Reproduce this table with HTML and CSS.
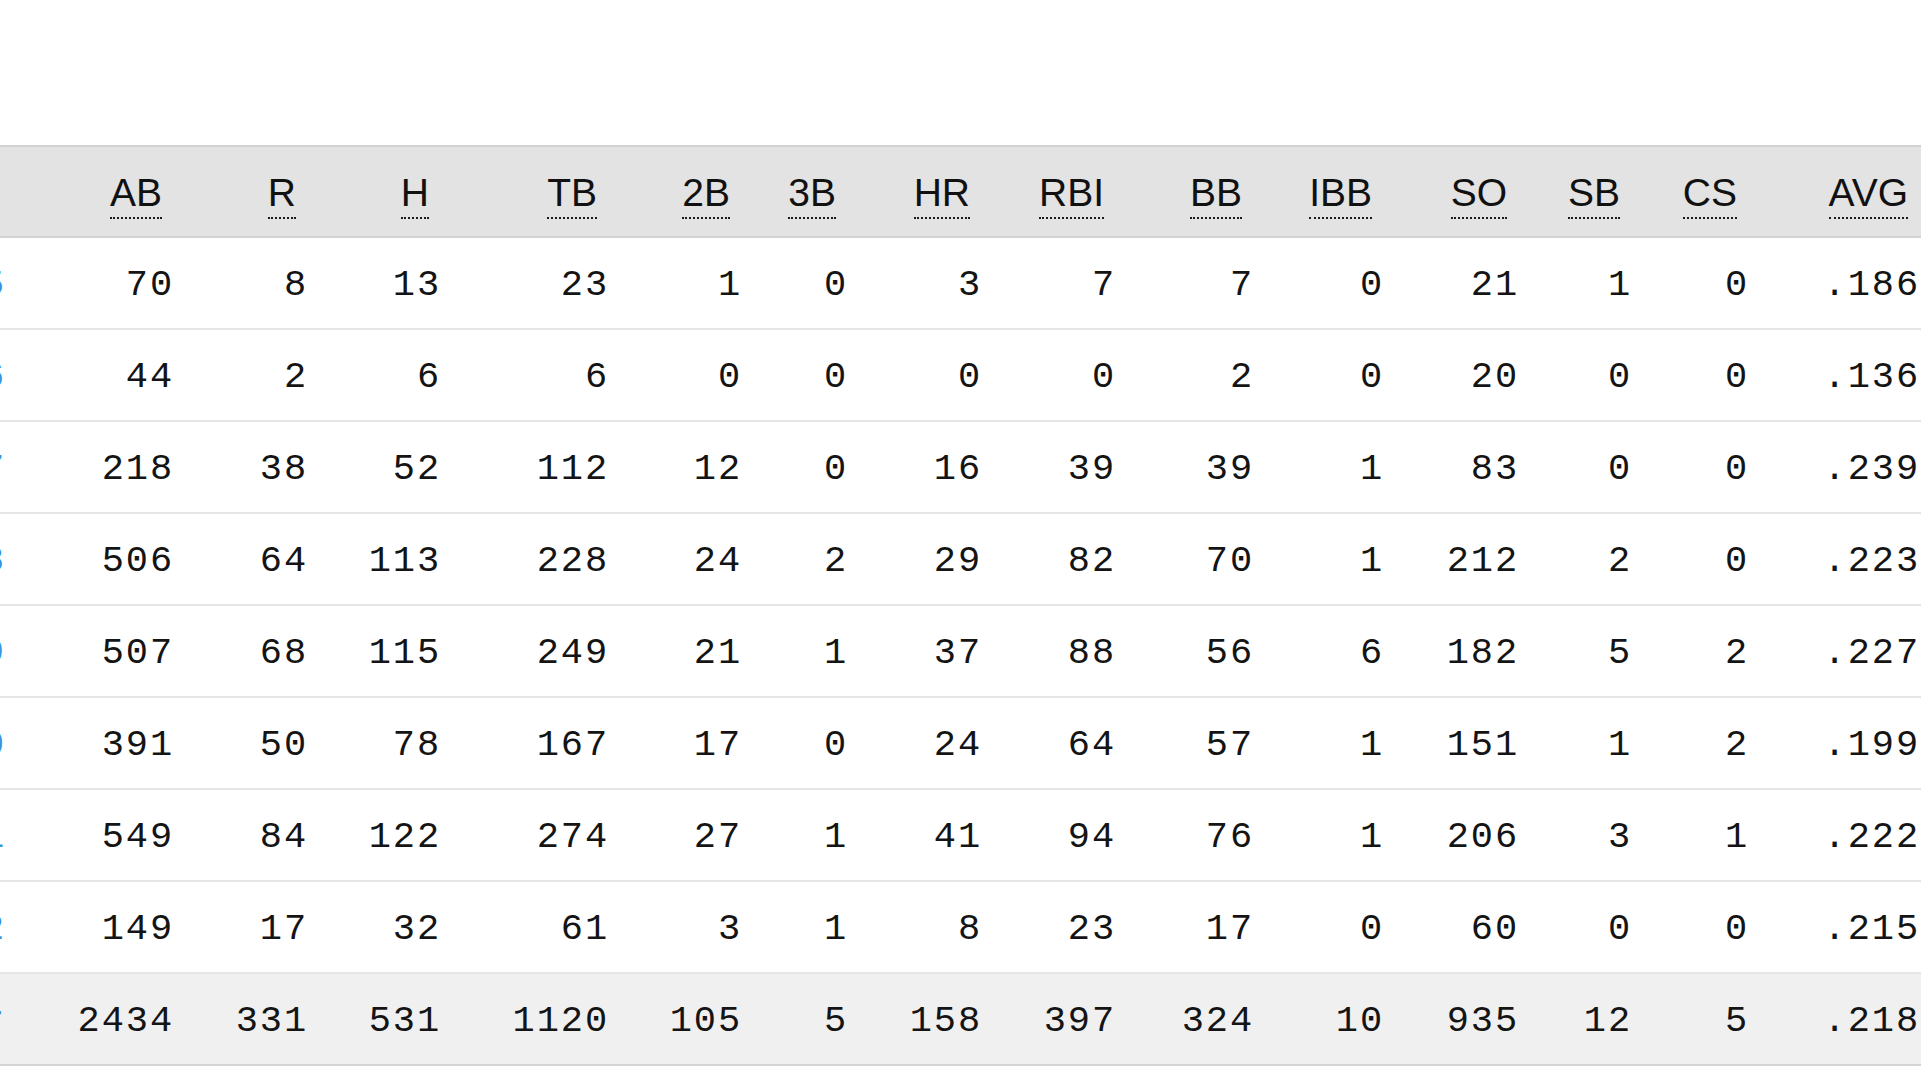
FILE: index.html
```html
<!DOCTYPE html>
<html lang="en">
<head>
<meta charset="utf-8">
<title>Batting Stats</title>
<link rel="stylesheet" href="styles.css">
</head>
<body>
<div class="scroller">
  <table class="stats">
    <colgroup>
      <col class="c-year">
      <col class="c-ab"><col class="c-r"><col class="c-h"><col class="c-tb">
      <col class="c-2b"><col class="c-3b"><col class="c-hr"><col class="c-rbi">
      <col class="c-bb"><col class="c-ibb"><col class="c-so"><col class="c-sb">
      <col class="c-cs"><col class="c-avg">
    </colgroup>
    <thead>
      <tr>
        <th class="year"><abbr title="Year">Year</abbr></th>
        <th><abbr title="At Bats">AB</abbr></th>
        <th><abbr title="Runs">R</abbr></th>
        <th><abbr title="Hits">H</abbr></th>
        <th><abbr title="Total Bases">TB</abbr></th>
        <th><abbr title="Doubles">2B</abbr></th>
        <th><abbr title="Triples">3B</abbr></th>
        <th><abbr title="Home Runs">HR</abbr></th>
        <th><abbr title="Runs Batted In">RBI</abbr></th>
        <th><abbr title="Walks">BB</abbr></th>
        <th><abbr title="Intentional Walks">IBB</abbr></th>
        <th><abbr title="Strikeouts">SO</abbr></th>
        <th><abbr title="Stolen Bases">SB</abbr></th>
        <th><abbr title="Caught Stealing">CS</abbr></th>
        <th><abbr title="Batting Average">AVG</abbr></th>
      </tr>
    </thead>
    <tbody>
      <tr><td class="year"><a href="#">2005</a></td><td>70</td><td>8</td><td>13</td><td>23</td><td>1</td><td>0</td><td>3</td><td>7</td><td>7</td><td>0</td><td>21</td><td>1</td><td>0</td><td>.186</td></tr>
      <tr><td class="year"><a href="#">2006</a></td><td>44</td><td>2</td><td>6</td><td>6</td><td>0</td><td>0</td><td>0</td><td>0</td><td>2</td><td>0</td><td>20</td><td>0</td><td>0</td><td>.136</td></tr>
      <tr><td class="year"><a href="#">2007</a></td><td>218</td><td>38</td><td>52</td><td>112</td><td>12</td><td>0</td><td>16</td><td>39</td><td>39</td><td>1</td><td>83</td><td>0</td><td>0</td><td>.239</td></tr>
      <tr><td class="year"><a href="#">2008</a></td><td>506</td><td>64</td><td>113</td><td>228</td><td>24</td><td>2</td><td>29</td><td>82</td><td>70</td><td>1</td><td>212</td><td>2</td><td>0</td><td>.223</td></tr>
      <tr><td class="year"><a href="#">2009</a></td><td>507</td><td>68</td><td>115</td><td>249</td><td>21</td><td>1</td><td>37</td><td>88</td><td>56</td><td>6</td><td>182</td><td>5</td><td>2</td><td>.227</td></tr>
      <tr><td class="year"><a href="#">2010</a></td><td>391</td><td>50</td><td>78</td><td>167</td><td>17</td><td>0</td><td>24</td><td>64</td><td>57</td><td>1</td><td>151</td><td>1</td><td>2</td><td>.199</td></tr>
      <tr><td class="year"><a href="#">2011</a></td><td>549</td><td>84</td><td>122</td><td>274</td><td>27</td><td>1</td><td>41</td><td>94</td><td>76</td><td>1</td><td>206</td><td>3</td><td>1</td><td>.222</td></tr>
      <tr><td class="year"><a href="#">2012</a></td><td>149</td><td>17</td><td>32</td><td>61</td><td>3</td><td>1</td><td>8</td><td>23</td><td>17</td><td>0</td><td>60</td><td>0</td><td>0</td><td>.215</td></tr>
    </tbody>
    <tfoot>
      <tr><td class="year"><a href="#">Career</a></td><td>2434</td><td>331</td><td>531</td><td>1120</td><td>105</td><td>5</td><td>158</td><td>397</td><td>324</td><td>10</td><td>935</td><td>12</td><td>5</td><td>.218</td></tr>
    </tfoot>
  </table>
</div>
</body>
</html>
```

FILE: styles.css
```css
html, body {
  margin: 0;
  padding: 0;
  background: #ffffff;
}

body {
  font-family: "Liberation Sans", Arial, sans-serif;
  color: #111111;
}

.scroller {
  overflow: hidden;
  padding-top: 145px;
}

.stats {
  border-collapse: separate;
  border-spacing: 0;
  table-layout: fixed;
  width: 2114px;
  margin-left: -185px;
}

.c-year { width: 201px; }
.c-ab { width: 168px; }
.c-r { width: 134px; }
.c-h { width: 133px; }
.c-tb { width: 168px; }
.c-2b { width: 133px; }
.c-3b { width: 106px; }
.c-hr { width: 134px; }
.c-rbi { width: 134px; }
.c-bb { width: 138px; }
.c-ibb { width: 130px; }
.c-so { width: 135px; }
.c-sb { width: 113px; }
.c-cs { width: 117px; }
.c-avg { width: 171px; }

.stats th {
  box-sizing: border-box;
  height: 93px;
  background: #e3e3e3;
  border-top: 2px solid #d2d2d2;
  border-bottom: 2px solid #d2d2d2;
  padding: 8px 22px 0 0;
  text-align: right;
  vertical-align: middle;
  font-family: "Liberation Sans", Arial, sans-serif;
  font-weight: normal;
  font-size: 39px;
  line-height: 1;
  white-space: nowrap;
}

.stats abbr {
  display: inline-block;
  text-decoration: none;
  line-height: 1;
  padding-bottom: 5px;
  border-bottom: 2px dotted #1a1a1a;
  color: #111111;
}

.stats td {
  box-sizing: border-box;
  height: 92px;
  border-bottom: 2px solid #e6e6e6;
  padding: 4px 10px 0 0;
  text-align: right;
  vertical-align: middle;
  font-family: "Liberation Mono", "Courier New", monospace;
  font-size: 37px;
  letter-spacing: 1.9px;
  white-space: nowrap;
  color: #141414;
}

.stats tfoot td {
  background: #f0f0f0;
  border-bottom: 2px solid #d4d4d4;
}

.stats .year a {
  color: #3b94dc;
  text-decoration: none;
}
```
